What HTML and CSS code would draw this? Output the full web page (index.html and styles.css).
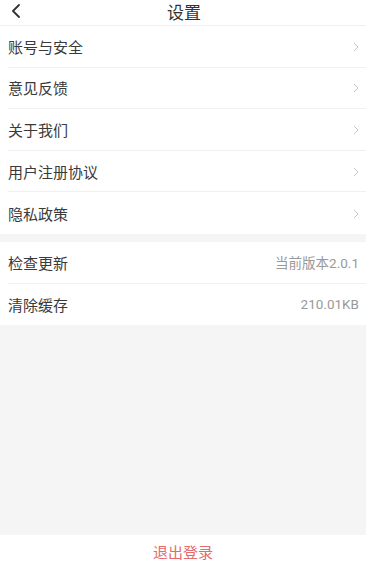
FILE: index.html
```html
<!DOCTYPE html>
<html lang="zh-CN">
<head>
<meta charset="utf-8">
<title>设置</title>
<link rel="stylesheet" href="styles.css">
</head>
<body>
<div class="page">
  <header class="header">
    <span class="back">
      <svg width="10" height="14" viewBox="0 0 10 14"><path d="M8 1 L2 7 L8 13" fill="none" stroke="#333" stroke-width="1.8" stroke-linecap="round" stroke-linejoin="round"/></svg>
    </span>
    <h1 class="title">设置</h1>
  </header>
  <section class="group">
    <div class="row"><span class="label">账号与安全</span><span class="arrow"><svg width="6" height="10" viewBox="0 0 6 10"><path d="M1 1 L5 5 L1 9" fill="none" stroke="#c4c4c4" stroke-width="1"/></svg></span></div>
    <div class="row"><span class="label">意见反馈</span><span class="arrow"><svg width="6" height="10" viewBox="0 0 6 10"><path d="M1 1 L5 5 L1 9" fill="none" stroke="#c4c4c4" stroke-width="1"/></svg></span></div>
    <div class="row"><span class="label">关于我们</span><span class="arrow"><svg width="6" height="10" viewBox="0 0 6 10"><path d="M1 1 L5 5 L1 9" fill="none" stroke="#c4c4c4" stroke-width="1"/></svg></span></div>
    <div class="row"><span class="label">用户注册协议</span><span class="arrow"><svg width="6" height="10" viewBox="0 0 6 10"><path d="M1 1 L5 5 L1 9" fill="none" stroke="#c4c4c4" stroke-width="1"/></svg></span></div>
    <div class="row last"><span class="label">隐私政策</span><span class="arrow"><svg width="6" height="10" viewBox="0 0 6 10"><path d="M1 1 L5 5 L1 9" fill="none" stroke="#c4c4c4" stroke-width="1"/></svg></span></div>
  </section>
  <section class="group second">
    <div class="row"><span class="label">检查更新</span><span class="value">当前版本2.0.1</span></div>
    <div class="row last"><span class="label">清除缓存</span><span class="value">210.01KB</span></div>
  </section>
  <div class="spacer"></div>
  <footer class="logout">退出登录</footer>
</div>
</body>
</html>
```
FILE: styles.css
```css
* { box-sizing: border-box; }
html, body { margin: 0; padding: 0; }
body {
  background: #f5f5f5;
  font-family: Roboto, "Noto Sans CJK SC", sans-serif;
  color: #3a3a3a;
}
.page {
  width: 366px;
  height: 567px;
  display: flex;
  flex-direction: column;
}
.header {
  height: 26px;
  background: #fff;
  border-bottom: 1px solid #f0f0f0;
  display: flex;
  align-items: center;
  justify-content: center;
  position: relative;
}
.back {
  position: absolute;
  left: 11px;
  top: 4px;
  display: flex;
}
.title {
  margin: 0;
  font-size: 17px;
  font-weight: normal;
  color: #333;
  line-height: 20px;
  padding-left: 2px;
}
.group {
  background: #fff;
  padding-left: 8px;
}
.group.second { margin-top: 8px; }
.row {
  height: 41.6px;
  display: flex;
  align-items: center;
  justify-content: space-between;
  padding-right: 7px;
  border-bottom: 1px solid #f0f0f0;
}
.row.last { border-bottom: none; }
.label {
  font-size: 15px;
  color: #3a3a3a;
}
.arrow { display: flex; padding-top: 1px; }
.value {
  font-size: 13.5px;
  color: #999;
}
.spacer { flex: 1; }
.logout {
  height: 32px;
  background: #fff;
  display: flex;
  align-items: center;
  justify-content: center;
  font-size: 15px;
  color: #e36b6b;
}
```
